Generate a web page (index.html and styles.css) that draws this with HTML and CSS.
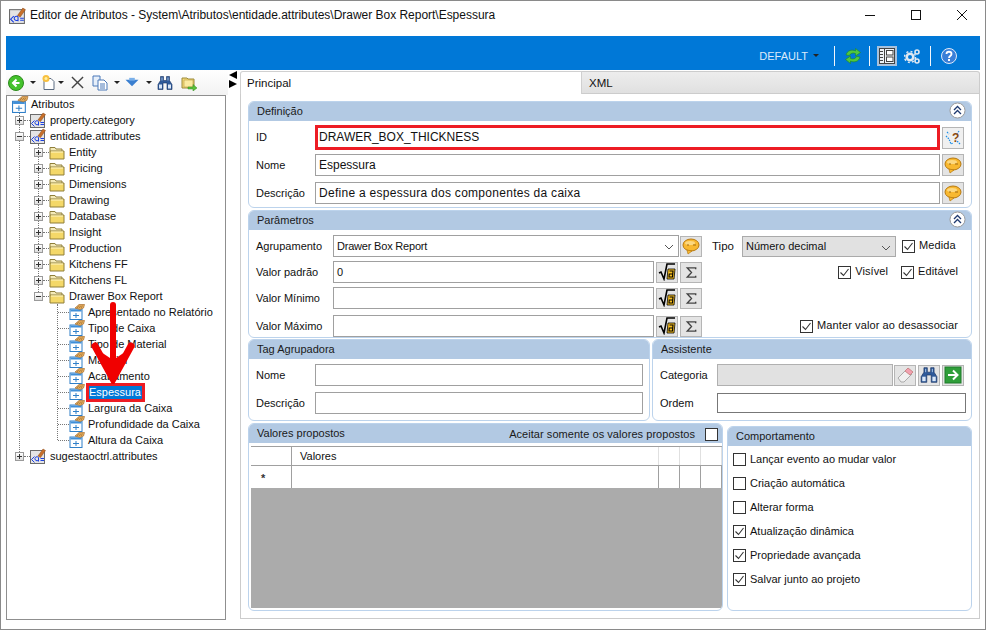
FILE: index.html
```html
<!DOCTYPE html>
<html lang="pt">
<head>
<meta charset="utf-8">
<title>Editor de Atributos</title>
<link rel="stylesheet" href="styles.css">
</head>
<body>
<svg class="defs" width="0" height="0">
  <defs>
    <symbol id="i-attr" viewBox="0 0 16 16">
      <rect x=".5" y="2.500" width="14" height="13" fill="#e4e4e4" stroke="#6b6b6b"/>
      <path d="M8 8l5-7 2.500 1.500-5 7z" fill="#c8702a" stroke="#8a4a18" stroke-width=".5"/>
      <path d="M4.500 8.500l-3 3 3 3" fill="none" stroke="#1a3fe0"/>
      <path d="M8.500 12a2 2 0 1 1 0-2.500v4" fill="none" stroke="#1a3fe0"/>
      <path d="M10.500 10.500h3.500M10.500 12.500h3.500" stroke="#1a3fe0"/>
    </symbol>
    <symbol id="i-folder" viewBox="0 0 16 16">
      <path d="M1 3.500h5l1 1.500h6v2.500H1z" fill="#f4eab8" stroke="#8f7f3a"/>
      <path d="M1 7h14v8H1z" fill="#f4d868" stroke="#8f7f3a"/>
      <path d="M2 8h12" stroke="#fff6c8"/>
    </symbol>
    <symbol id="i-leaf" viewBox="0 0 16 16">
      <rect x="1" y="5" width="12" height="10.500" fill="#fff" stroke="#2f7fc8"/>
      <path d="M1.500 5.500h11v2h-11z" fill="#3f8fd8"/>
      <path d="M7 9v5M4 11.500h6" stroke="#2f7fc8"/>
      <path d="M6 4l4-3.500 5.500 0-1 3.500-3.500 1.500z" fill="#e8b060" stroke="#a87030" stroke-width=".7"/>
      <path d="M8 4l2-2.500M10 4l2-2.500M12 4l1.500-2.500" stroke="#8a5a20" stroke-width=".6"/>
    </symbol>
    <symbol id="i-speech" viewBox="0 0 18 18">
      <ellipse cx="9" cy="8" rx="8" ry="6" fill="#f8b830" stroke="#b87a10"/>
      <path d="M5 13l1 4 4-3z" fill="#f8b830" stroke="#b87a10" stroke-width=".7"/>
      <ellipse cx="8" cy="6" rx="5" ry="2" fill="#fcd880"/>
      <path d="M5 8h2M11 8h3" stroke="#a06a10"/>
    </symbol>
    <symbol id="i-sqrt" viewBox="0 0 18 18">
      <path d="M1 10l2-1 3 7 3-15h8" fill="none" stroke="#000" stroke-width="1.600"/>
      <path d="M10 6h7l-1 10H9z" fill="#f8c020" stroke="#000" stroke-width=".8"/>
      <path d="M11.500 8h3.500l-.5 6h-3.500l.2-3h3.500" fill="none" stroke="#000" stroke-width="1.100"/>
    </symbol>
    <symbol id="i-sigma" viewBox="0 0 14 14">
      <path d="M11.500 3.500V2H2.500l4.500 5-4.500 5h9v-1.500" fill="none" stroke="#444" stroke-width="1.500"/>
    </symbol>
    <symbol id="i-collapse" viewBox="0 0 18 18">
      <circle cx="8.500" cy="8.500" r="7.500" fill="#fff" stroke="#9a9a9a"/>
      <path d="M5 8l3.500-3.500L12 8M5 12l3.500-3.500L12 12" fill="none" stroke="#1f3a70" stroke-width="1.300"/>
    </symbol>
    <symbol id="i-binoc" viewBox="0 0 16 16">
      <path d="M3.500 1.500h3v4h3v-4h3v4l2.500 4v5h-5V8H6v6.500H1v-5l2.500-4z" fill="#2f5a9a" stroke="#16305f" stroke-width=".6"/>
      <rect x="2" y="9.500" width="3" height="4" fill="#dbe7f7"/>
      <rect x="11" y="9.500" width="3" height="4" fill="#dbe7f7"/>
      <rect x="4.500" y="2.500" width="1" height="3" fill="#9fbce0"/>
      <rect x="10.500" y="2.500" width="1" height="3" fill="#9fbce0"/>
    </symbol>
    <symbol id="i-check" viewBox="0 0 13 13">
      <path d="M2.500 6.500l3 3 5-6.500" fill="none" stroke="#333" stroke-width="1.100"/>
    </symbol>
  </defs>
</svg>

<div class="window">
  <header class="titlebar">
    <svg class="title-icon"><use href="#i-attr"/></svg>
    <span class="title-text">Editor de Atributos - System\Atributos\entidade.attributes\Drawer Box Report\Espessura</span>
    <div class="win-controls">
      <svg class="win-btn" viewBox="0 0 46 16"><path d="M18 8.500h10" stroke="#111"/></svg>
      <svg class="win-btn" viewBox="0 0 46 16"><rect x="18.500" y="3.500" width="9" height="9" fill="none" stroke="#111"/></svg>
      <svg class="win-btn" viewBox="0 0 46 16"><path d="M18 3l10 10M28 3L18 13" stroke="#111"/></svg>
    </div>
  </header>

  <div class="bluebar">
    <span class="profile">DEFAULT</span>
    <span class="profile-caret"></span>
    <span class="bar-sep sep-a"></span>
    <svg class="bar-icon" viewBox="0 0 16 16">
      <path d="M1 7C2 2.500 7 1 10.500 3V.5L15.500 4.500 10.500 8V5.500C8 4.500 5.500 5 4.500 7.500z" fill="#52c83c" stroke="#1f8a1f" stroke-width=".6"/>
      <path d="M15 9C14 13.500 9 15 5.500 13v2.500L.5 11.500 5.500 8v2.500c2.500 1 5 .5 6-2z" fill="#52c83c" stroke="#1f8a1f" stroke-width=".6"/>
    </svg>
    <span class="bar-sep sep-b"></span>
    <span class="bar-toggle">
      <svg class="bar-icon" viewBox="0 0 16 16">
        <rect x=".5" y=".5" width="15" height="15" fill="#eef2f6" stroke="#444"/>
        <path d="M5.500 .5v15M1 3.500h3M1 6.500h3M1 9.500h3M1 12.500h3" stroke="#444"/>
        <rect x="7.500" y="2.500" width="6.500" height="4.500" fill="#fff" stroke="#444"/>
        <rect x="7.500" y="9" width="6.500" height="4.500" fill="#fff" stroke="#444"/>
      </svg>
    </span>
    <svg class="bar-icon gears" viewBox="0 0 16 16">
      <circle cx="6" cy="9" r="3.300" fill="none" stroke="#dfe8f2" stroke-width="2.600"/>
      <circle cx="6" cy="9" r="5.500" fill="none" stroke="#dfe8f2" stroke-width="1.500" stroke-dasharray="2 2.300"/>
      <circle cx="13" cy="4" r="2" fill="none" stroke="#dfe8f2" stroke-width="1.600"/>
      <circle cx="13" cy="13" r="2" fill="none" stroke="#dfe8f2" stroke-width="1.600"/>
    </svg>
    <span class="bar-sep sep-c"></span>
    <svg class="bar-icon help" viewBox="0 0 16 16">
      <circle cx="8" cy="8" r="7.500" fill="#3a7fd8" stroke="#dfeaf8"/>
      <path d="M5.500 6c0-3 5-3 5 0 0 2-2.500 2-2.500 4" fill="none" stroke="#fff" stroke-width="1.800"/>
      <rect x="7" y="11" width="2" height="2" fill="#fff"/>
    </svg>
  </div>

  <div class="main">
    <aside class="left">
      <div class="toolbar">
        <svg class="tb tb-back" viewBox="0 0 16 16">
          <circle cx="8" cy="8" r="7.500" fill="#44c22c" stroke="#2c8a1c"/>
          <path d="M11.500 8h-5M8.500 4.500L5 8l3.500 3.500" fill="none" stroke="#fff" stroke-width="2"/>
        </svg>
        <span class="caret"></span>
        <svg class="tb tb-new" viewBox="0 0 16 16">
          <path d="M3 4h7l3 3v8H3z" fill="#fff" stroke="#5a6a80"/>
          <circle cx="5" cy="4" r="3.500" fill="#f8c040"/>
          <circle cx="5" cy="4" r="1.500" fill="#fff0a0"/>
        </svg>
        <span class="caret caret-tight"></span>
        <svg class="tb tb-x" viewBox="0 0 14 14"><path d="M1 1l12 12M13 1L1 13" stroke="#444" stroke-width="1.500"/></svg>
        <svg class="tb tb-copy" viewBox="0 0 16 16">
          <path d="M1 1h7v10H1z" fill="#e6effa" stroke="#4a78b8"/>
          <path d="M6 5h6l3 3v7H6z" fill="#fff" stroke="#4a78b8"/>
          <path d="M8 9h5M8 11h5M8 13h5" stroke="#4a78b8"/>
        </svg>
        <span class="caret"></span>
        <svg class="tb tb-down" viewBox="0 0 14 14"><path d="M0 4h14L7 11z" fill="#3a7fd0"/><path d="M4 2h6v3H4z" fill="#7ab0ea"/></svg>
        <span class="caret caret-wide"></span>
        <svg class="tb tb-binoc"><use href="#i-binoc"/></svg>
        <svg class="tb tb-fold" viewBox="0 0 16 16">
          <path d="M1 3h5l1 1h6v9H1z" fill="#f4d878" stroke="#9a8a3a"/>
          <path d="M3 5h9v7H3z" fill="#fbeaa0" stroke="#b8a040" stroke-width=".6"/>
          <path d="M7 12h5V9.500l4 3.500-4 3v-2H7z" fill="#5cc03c" stroke="#2c8a1c" stroke-width=".5"/>
        </svg>
      </div>
      <div class="tree">
        <span class="tree-line line-root"></span>
        <span class="tree-line line-ent"></span>
        <span class="tree-line line-draw"></span>
        <div class="row root"><svg class="ico"><use href="#i-leaf"/></svg><span class="lbl">Atributos</span></div>
        <div class="row l1"><span class="exp plus"></span><svg class="ico"><use href="#i-attr"/></svg><span class="lbl">property.category</span></div>
        <div class="row l1"><span class="exp minus"></span><svg class="ico"><use href="#i-attr"/></svg><span class="lbl">entidade.attributes</span></div>
        <div class="row l2"><span class="exp plus"></span><svg class="ico"><use href="#i-folder"/></svg><span class="lbl">Entity</span></div>
        <div class="row l2"><span class="exp plus"></span><svg class="ico"><use href="#i-folder"/></svg><span class="lbl">Pricing</span></div>
        <div class="row l2"><span class="exp plus"></span><svg class="ico"><use href="#i-folder"/></svg><span class="lbl">Dimensions</span></div>
        <div class="row l2"><span class="exp plus"></span><svg class="ico"><use href="#i-folder"/></svg><span class="lbl">Drawing</span></div>
        <div class="row l2"><span class="exp plus"></span><svg class="ico"><use href="#i-folder"/></svg><span class="lbl">Database</span></div>
        <div class="row l2"><span class="exp plus"></span><svg class="ico"><use href="#i-folder"/></svg><span class="lbl">Insight</span></div>
        <div class="row l2"><span class="exp plus"></span><svg class="ico"><use href="#i-folder"/></svg><span class="lbl">Production</span></div>
        <div class="row l2"><span class="exp plus"></span><svg class="ico"><use href="#i-folder"/></svg><span class="lbl">Kitchens FF</span></div>
        <div class="row l2"><span class="exp plus"></span><svg class="ico"><use href="#i-folder"/></svg><span class="lbl">Kitchens FL</span></div>
        <div class="row l2"><span class="exp minus"></span><svg class="ico"><use href="#i-folder"/></svg><span class="lbl">Drawer Box Report</span></div>
        <div class="row l3"><span class="dash"></span><svg class="ico"><use href="#i-leaf"/></svg><span class="lbl">Apresentado no Relatório</span></div>
        <div class="row l3"><span class="dash"></span><svg class="ico"><use href="#i-leaf"/></svg><span class="lbl">Tipo de Caixa</span></div>
        <div class="row l3"><span class="dash"></span><svg class="ico"><use href="#i-leaf"/></svg><span class="lbl">Tipo de Material</span></div>
        <div class="row l3"><span class="dash"></span><svg class="ico"><use href="#i-leaf"/></svg><span class="lbl">Material</span></div>
        <div class="row l3"><span class="dash"></span><svg class="ico"><use href="#i-leaf"/></svg><span class="lbl">Acabamento</span></div>
        <div class="row l3"><span class="dash"></span><svg class="ico"><use href="#i-leaf"/></svg><span class="lbl sel">Espessura</span></div>
        <div class="row l3"><span class="dash"></span><svg class="ico"><use href="#i-leaf"/></svg><span class="lbl">Largura da Caixa</span></div>
        <div class="row l3"><span class="dash"></span><svg class="ico"><use href="#i-leaf"/></svg><span class="lbl">Profundidade da Caixa</span></div>
        <div class="row l3"><span class="dash"></span><svg class="ico"><use href="#i-leaf"/></svg><span class="lbl">Altura da Caixa</span></div>
        <div class="row l1"><span class="exp plus"></span><svg class="ico"><use href="#i-attr"/></svg><span class="lbl">sugestaoctrl.attributes</span></div>
        <svg class="red-arrow" viewBox="0 0 44 82">
          <path d="M22 3v70" stroke="#f00000" stroke-width="6" stroke-linecap="round" fill="none"/>
          <path d="M4 44l18 33 18-33" stroke="#f00000" stroke-width="7" stroke-linecap="round" stroke-linejoin="miter" fill="none"/>
          <path d="M10 50l12 22 12-22-12 8z" fill="#f00000"/>
        </svg>
      </div>
    </aside>

    <div class="splitter"><span class="arr-left"></span><span class="arr-right"></span></div>

    <section class="right">
      <div class="tabs">
        <div class="tab active">Principal</div>
        <div class="tab">XML</div>
      </div>
      <div class="content">
        <div class="panel p-def">
          <div class="phead">Definição<svg class="collapse"><use href="#i-collapse"/></svg></div>
          <div class="pbody def-body">
            <div class="frow"><label class="flabel id-label">ID</label><div class="input id-input">DRAWER_BOX_THICKNESS</div><button class="btn btn-id"><svg viewBox="0 0 18 18" class="bi">
              <path d="M3 3l2 2M15 2l-2 3M2 7l3 3 2 5 2-1M16 15l-3-3" fill="none" stroke="#1e90e8" stroke-width="1.200" stroke-dasharray="1.500 1"/>
              <text x="8" y="13" class="qmark">?</text></svg></button></div>
            <div class="frow"><label class="flabel">Nome</label><div class="input">Espessura</div><button class="btn"><svg class="bi"><use href="#i-speech"/></svg></button></div>
            <div class="frow"><label class="flabel">Descrição</label><div class="input wide">Define a espessura dos componentes da caixa</div><button class="btn"><svg class="bi"><use href="#i-speech"/></svg></button></div>
          </div>
        </div>

        <div class="panel p-par">
          <div class="phead">Parâmetros<svg class="collapse"><use href="#i-collapse"/></svg></div>
          <div class="pbody par-body">
            <div class="prow"><label class="plabel">Agrupamento</label><div class="input combo">Drawer Box Report<svg class="chev" viewBox="0 0 10 6"><path d="M1 1l4 4 4-4" fill="none" stroke="#555"/></svg></div><button class="btn"><svg class="bi"><use href="#i-speech"/></svg></button>
              <div class="pside"><span class="tipo-l">Tipo</span><div class="combo-gray">Número decimal<svg class="chev" viewBox="0 0 10 6"><path d="M1 1l4 4 4-4" fill="none" stroke="#555"/></svg></div><span class="chk on"><svg><use href="#i-check"/></svg></span><span class="chk-l">Medida</span></div></div>
            <div class="prow"><label class="plabel">Valor padrão</label><div class="input short">0</div><button class="btn"><svg class="bi"><use href="#i-sqrt"/></svg></button><button class="btn"><svg class="bi sig"><use href="#i-sigma"/></svg></button>
              <div class="pside end"><span class="chk on"><svg><use href="#i-check"/></svg></span><span class="chk-l w-vis">Visível</span><span class="chk on"><svg><use href="#i-check"/></svg></span><span class="chk-l">Editável</span></div></div>
            <div class="prow"><label class="plabel">Valor Mínimo</label><div class="input short"></div><button class="btn"><svg class="bi"><use href="#i-sqrt"/></svg></button><button class="btn"><svg class="bi sig"><use href="#i-sigma"/></svg></button></div>
            <div class="prow last"><label class="plabel">Valor Máximo</label><div class="input short"></div><button class="btn"><svg class="bi"><use href="#i-sqrt"/></svg></button><button class="btn"><svg class="bi sig"><use href="#i-sigma"/></svg></button>
              <div class="pside end"><span class="chk on"><svg><use href="#i-check"/></svg></span><span class="chk-l">Manter valor ao desassociar</span></div></div>
          </div>
        </div>

        <div class="pair">
          <div class="panel p-tag">
            <div class="phead">Tag Agrupadora</div>
            <div class="pbody tag-body">
              <div class="frow"><label class="flabel">Nome</label><div class="input"></div></div>
              <div class="frow"><label class="flabel">Descrição</label><div class="input"></div></div>
            </div>
          </div>
          <div class="panel p-asst">
            <div class="phead">Assistente</div>
            <div class="pbody asst-body">
              <div class="frow"><label class="alabel">Categoria</label><div class="input disabled"></div>
                <button class="btn"><svg class="bi" viewBox="0 0 18 18"><path d="M2 12l8-8 6 4-8 8H5z" fill="#f0f0f0" stroke="#aaa"/><path d="M9 5l3-3 5 4-3 3z" fill="#f2a0b0" stroke="#c88"/></svg></button>
                <button class="btn"><svg class="bi"><use href="#i-binoc"/></svg></button>
                <button class="btn"><svg class="bi" viewBox="0 0 18 18"><rect x="1" y="1" width="16" height="16" fill="#2f9e3a" stroke="#1f7a2a"/><path d="M4 9h9M9 4.500L13.500 9 9 13.500" fill="none" stroke="#fff" stroke-width="2"/></svg></button>
              </div>
              <div class="frow"><label class="alabel">Ordem</label><div class="input ordem"></div></div>
            </div>
          </div>
        </div>

        <div class="pair bottom">
          <div class="panel p-val">
            <div class="phead val-head"><span>Valores propostos</span><span class="accept">Aceitar somente os valores propostos</span><span class="chk"></span></div>
            <div class="grid">
              <div class="g-head"><span class="g-rh"></span><span class="g-c">Valores</span><span class="g-x"></span><span class="g-x"></span><span class="g-x"></span></div>
              <div class="g-row"><span class="g-rh star">*</span><span class="g-c"></span><span class="g-x"></span><span class="g-x"></span><span class="g-x"></span></div>
              <div class="g-empty"></div>
            </div>
          </div>
          <div class="panel p-beh">
            <div class="phead">Comportamento</div>
            <div class="pbody beh-body">
              <div class="beh"><span class="chk"></span><span class="chk-l">Lançar evento ao mudar valor</span></div>
              <div class="beh"><span class="chk"></span><span class="chk-l">Criação automática</span></div>
              <div class="beh"><span class="chk"></span><span class="chk-l">Alterar forma</span></div>
              <div class="beh"><span class="chk on"><svg><use href="#i-check"/></svg></span><span class="chk-l">Atualização dinâmica</span></div>
              <div class="beh"><span class="chk on"><svg><use href="#i-check"/></svg></span><span class="chk-l">Propriedade avançada</span></div>
              <div class="beh"><span class="chk on"><svg><use href="#i-check"/></svg></span><span class="chk-l">Salvar junto ao projeto</span></div>
            </div>
          </div>
        </div>
      </div>
    </section>
  </div>
</div>
</body>
</html>
```
FILE: styles.css
```css
* { box-sizing: border-box; }
html, body { margin: 0; padding: 0; }
body {
  width: 986px; height: 630px; overflow: hidden; background: #fff;
  font: 11px "Liberation Sans", Arial, sans-serif; color: #111;
}
.defs { position: absolute; }
button { padding: 0; font: inherit; }
.window {
  width: 986px; height: 630px; border: 1px solid #8a8a8a;
  display: flex; flex-direction: column; background: #fff;
}
.titlebar { height: 35px; display: flex; align-items: center; padding: 0 0 7px 8px; flex: none; font-size: 12px; }
.title-icon { width: 17px; height: 17px; }
.title-text { margin-left: 4px; flex: 1; letter-spacing: -.02px; }
.win-controls { display: flex; }
.win-btn { width: 46px; height: 16px; }

.bluebar {
  height: 34px; margin: 0 5px; background: #0078d7; flex: none; padding-top: 5px;
  display: flex; align-items: center; justify-content: flex-end; color: #dbeafa;
}
.profile { margin-right: 5px; }
.profile-caret { border: 3px solid transparent; border-top: 3px solid #222; border-bottom: 0; margin-right: 15px; width: 6px; }
.bar-sep { width: 1px; height: 20px; background: #f2f6fb; flex: none; }
.bar-icon { width: 16px; height: 16px; flex: none; }
.sep-a + .bar-icon { margin: 1px 8px 0 10px; }
.sep-b { margin-right: 7px; }
.bar-toggle { width: 20px; height: 20px; background: #a9c2dc; display: flex; align-items: center; justify-content: center; margin-right: 7px; }
.gears { margin-right: 10px; }
.sep-c { margin-right: 10px; }
.help { margin-right: 23px; }

.main { flex: 1; display: flex; padding: 0 5px; min-height: 0; }
.left { width: 222px; display: flex; flex-direction: column; flex: none; }
.toolbar { height: 25px; display: flex; align-items: center; background: linear-gradient(#fff, #f2f2f2); padding-left: 2px; flex: none; }
.tb { flex: none; }
.tb-back { width: 16px; height: 16px; }
.tb-new { width: 16px; height: 17px; margin-left: 5px; }
.tb-x { width: 13px; height: 13px; margin-left: 7px; }
.tb-copy { width: 16px; height: 16px; margin-left: 8px; }
.tb-down { width: 14px; height: 13px; margin-left: 5px; }
.tb-binoc { width: 16px; height: 16px; margin-left: 5px; }
.tb-fold { width: 16px; height: 16px; margin-left: 8px; }
.caret { border: 3px solid transparent; border-top-color: #222; border-bottom: 0; margin-left: 6px; width: 6px; height: 3px; flex: none; }
.caret-tight { margin-left: 1px; }
.caret-wide { margin-left: 7px; }

.tree {
  flex: 1; border: 1px solid #8f8f8f; margin: 0 0 9px 0; position: relative;
  width: 220px; overflow: hidden;
}
.row { height: 16px; display: flex; align-items: center; white-space: nowrap; position: relative; }
.ico { width: 16px; height: 16px; flex: none; }
.lbl { margin-left: 4px; line-height: 16px; }
.root { padding-left: 4px; }
.l1 { padding-left: 8px; }
.l2 { padding-left: 27px; }
.l3 { padding-left: 45px; }
.root .ico { width: 18px; height: 17px; }
.root .lbl { margin-left: 2px; }
.l1::before, .l2::before { content: ""; position: absolute; top: 8px; width: 6px; border-top: 1px dotted #777; }
.l1::before { left: 17px; }
.l2::before { left: 36px; }
.exp { width: 9px; height: 9px; border: 1px solid #9a9a9a; background: linear-gradient(#fff,#ddd); position: relative; margin-right: 6px; flex: none; z-index: 1; }
.exp::before { content: ""; position: absolute; left: 1px; top: 3px; width: 5px; height: 1px; background: #333; }
.plus::after { content: ""; position: absolute; left: 3px; top: 1px; width: 1px; height: 5px; background: #333; }
.dash { width: 11px; border-top: 1px dotted #777; margin-left: 6px; flex: none; }
.l3 .lbl { margin-left: 3px; }
.l3 .sel {
  background: #0078d7; color: #fff; outline: 3px solid #ed1c24; outline-offset: -1px;
  padding: 0 2px 0 1px; margin-left: 3px; height: 15px; line-height: 15px; position: relative; z-index: 1;
}
.tree-line { position: absolute; border-left: 1px dotted #777; }
.line-root { left: 12px; top: 12px; height: 348px; }
.line-ent { left: 31px; top: 48px; height: 152px; }
.line-draw { left: 50px; top: 208px; height: 136px; }
.red-arrow { position: absolute; left: 84px; top: 206px; width: 44px; height: 82px; z-index: 2; }

.splitter { width: 12px; flex: none; padding: 1px 0 0 1px; display: flex; flex-direction: column; align-items: flex-start; gap: 1px; }
.arr-left { border: 4px solid transparent; border-right: 8px solid #000; border-left: 0; }
.arr-right { border: 4px solid transparent; border-left: 8px solid #000; border-right: 0; }

.right { width: 740px; flex: none; display: flex; flex-direction: column; height: 549px; }
.tabs { display: flex; height: 23px; flex: none; margin-top: 1px; font-size: 11.500px; }
.tab { line-height: 22px; padding-left: 7px; background: linear-gradient(#ededed, #e0e0e0); border: 1px solid #ccc; border-left: 0; flex: 1; border-radius: 0 3px 0 0; }
.tab.active { flex: none; width: 342px; background: #fff; border: 1px solid #d0d0d0; border-bottom: 0; padding-left: 6px; border-radius: 3px 0 0 0; }
.content { flex: 1; border: 1px solid #ccc; border-top: 0; padding: 7px 7px 0 7px; width: 740px; }

.panel { border: 1px solid #bcd3ec; border-radius: 6px; background: #fff; overflow: hidden; }
.phead {
  height: 20px; background: #b2c9e3; display: flex; align-items: center; padding-left: 9px;
  justify-content: space-between; color: #1a1a1a; margin: -1px -1px 0 -1px;
}
.collapse { width: 18px; height: 18px; margin-right: 5px; }
.p-def { height: 107px; }
.def-body { padding: 4px 7px 0 7px; }
.frow { display: flex; align-items: center; }
.flabel { width: 59px; flex: none; }
.id-label { padding-bottom: 2px; }
.input {
  flex: 1; height: 22px; border: 1px solid #a0a0a0; background: #fff; padding-left: 3px;
  line-height: 20px; position: relative; white-space: nowrap;
}
.def-body .frow { height: 22px; margin-bottom: 6px; }
.def-body .btn { margin-left: 2px; }
.def-body .input { font-size: 12px; }
.def-body .wide { letter-spacing: .28px; }
.def-body .frow:first-child { height: 25px; margin-bottom: 4px; }
.def-body .id-input { height: 25px; border: 3px solid #ed1c24; padding-left: 1px; line-height: 18px; }
.btn {
  width: 22px; height: 21px; flex: none; background: #e4e4e4; border: 1px solid #b5b5b5;
  display: inline-flex; align-items: center; justify-content: center;
}
.def-body .btn { height: 22px; }
.def-body .btn-id { background: #f0f0f0; }
.bi { width: 18px; height: 18px; }
.bi.sig { width: 13px; height: 13px; }
.qmark { font: bold 12px "Liberation Sans", sans-serif; fill: #8a4a10; }

.p-par { height: 128px; margin-top: 2px; }
.par-body { padding: 4px 0 0 7px; margin-top: 1px; }
.prow { display: flex; align-items: center; height: 22px; margin-bottom: 4px; }
.prow:nth-child(3) { margin-bottom: 6px; }
.prow .input { flex: none; height: 22px; line-height: 20px; }
.plabel { width: 77px; flex: none; }
.combo { width: 346px; letter-spacing: -.2px; }
.short { width: 321px; margin-right: 2px; }
.prow .btn + .btn { margin-left: 2px; }
.combo + .btn { margin-left: 1px; }
.chev { position: absolute; right: 4px; top: 8px; width: 10px; height: 6px; }
.pside { flex: 1; display: flex; align-items: center; padding-left: 10px; }
.pside.end { justify-content: flex-end; padding-right: 13px; }
.pside .chk-l { letter-spacing: .1px; margin-top: -2px; }
.tipo-l { width: 30px; font-size: 11.500px; }
.combo-gray {
  width: 154px; height: 21px; background: #e1e1e1; border: 1px solid #aaa; line-height: 19px; padding-left: 3px;
  position: relative; margin-right: 6px;
}
.chk {
  width: 13px; height: 13px; border: 1px solid #333; background: #fff; flex: none; display: inline-block; position: relative;
}
.chk svg { position: absolute; left: -1px; top: -1px; width: 13px; height: 13px; }
.chk-l { margin-left: 4px; white-space: nowrap; }
.pside .w-vis { margin-right: 13px; }

.pair { display: flex; gap: 2px; margin-top: 1px; }
.p-tag { width: 402px; height: 82px; }
.p-asst { width: 320px; height: 82px; }
.tag-body { padding: 5px 6px 0 7px; }
.tag-body .frow, .asst-body .frow { height: 22px; margin-bottom: 6px; }
.asst-body { padding: 5px 5px 0 7px; }
.alabel { width: 57px; flex: none; }
.asst-body .btn { margin-left: 2px; }
.asst-body .disabled + .btn { margin-left: 1px; }
.asst-body .input.disabled { flex: none; width: 176px; background: #e1e1e1; border-color: #b0b0b0; }
.asst-body .ordem { height: 20px; border-color: #777; }

.pair.bottom { margin-top: 2px; gap: 4px; align-items: flex-end; }
.p-val { width: 475px; height: 188px; }
.p-beh { width: 245px; height: 185px; }
.val-head { padding-right: 2px; }
.accept { margin-left: auto; margin-right: 10px; margin-top: 1px; letter-spacing: .05px; }
.val-head .chk { margin-right: 3px; margin-top: 2px; }
.grid { margin: 0 0 0 2px; padding-top: 3px; height: 165px; display: flex; flex-direction: column; }
.g-head, .g-row { display: flex; }
.g-head { height: 20px; border-top: 1px solid #a0a0a0; border-bottom: 1px solid #a0a0a0; flex: none; }
.g-row { height: 22px; flex: none; }
.g-rh { width: 41px; flex: none; border-right: 1px solid #a0a0a0; }
.g-c { flex: 1; padding-left: 8px; line-height: 19px; border-right: 1px solid #e0e0e0; }
.g-x { width: 21px; flex: none; border-right: 1px solid #e0e0e0; }
.g-row .g-c, .g-row .g-x { border-right-color: #a0a0a0; }
.star { font-weight: bold; padding-left: 10px; line-height: 24px; color: #333; }
.g-empty { flex: 1; background: #ababab; }
.beh-body { padding: 1px 0 0 5px; }
.beh { height: 24px; display: flex; align-items: center; }
```
